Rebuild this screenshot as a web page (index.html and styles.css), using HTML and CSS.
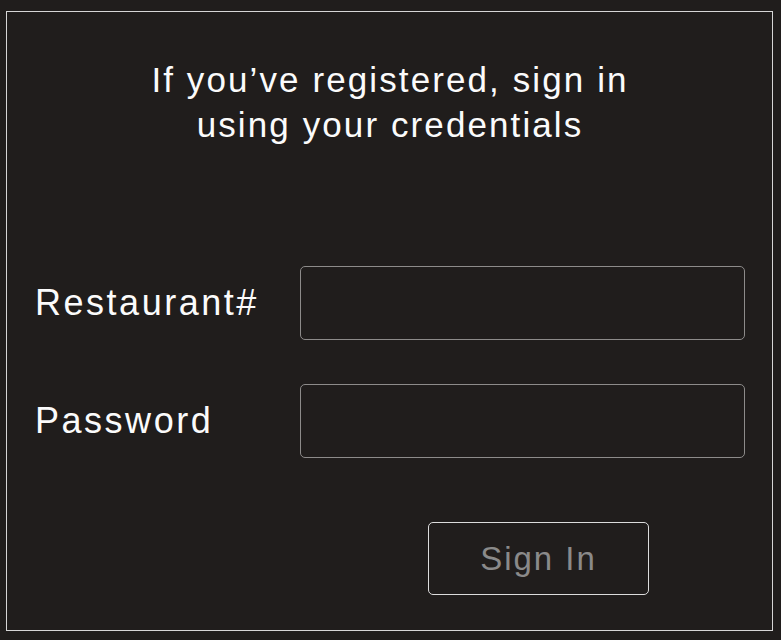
FILE: index.html
```html
<!DOCTYPE html>
<html lang="en">
<head>
<meta charset="utf-8">
<title>Sign in</title>
<link rel="stylesheet" href="styles.css">
</head>
<body>
<div class="card">
  <h1 class="title">If you’ve registered, sign in<br>using your credentials</h1>
  <form class="form">
    <label class="label" for="rest">Restaurant#</label>
    <input class="field" id="rest" type="text">
    <label class="label" for="pw">Password</label>
    <input class="field" id="pw" type="password">
    <button class="btn" type="button">Sign In</button>
  </form>
</div>
</body>
</html>
```
FILE: styles.css
```css
html, body {
  margin: 0;
  background: #201d1c;
}
body {
  padding: 11px 0 0 6px;
  font-family: "Liberation Sans", Arial, sans-serif;
  color: #fbfbfb;
}
.card {
  box-sizing: border-box;
  width: 767px;
  height: 620px;
  border: 1px solid #d6d6d6;
  padding: 45px 27px 0 28px;
}
.title {
  margin: 0;
  font-weight: normal;
  font-size: 35px;
  line-height: 45px;
  letter-spacing: 0.06em;
  text-align: center;
}
.form {
  display: grid;
  grid-template-columns: 265px 445px;
  grid-template-rows: 74px 74px auto;
  row-gap: 44px;
  align-items: center;
  margin-top: 119px;
}
.label {
  font-size: 36px;
  letter-spacing: 0.07em;
}
.field {
  box-sizing: border-box;
  height: 74px;
  width: 445px;
  background: transparent;
  border: 1px solid #8d8b8a;
  border-radius: 5px;
}
.btn {
  grid-column: 2;
  box-sizing: border-box;
  width: 221px;
  height: 73px;
  margin: 20px 0 0 128px;
  background: transparent;
  border: 1px solid #dcdcdc;
  border-radius: 5px;
  color: #8a8a8a;
  font-family: "Liberation Sans", Arial, sans-serif;
  font-size: 33px;
  letter-spacing: 0.06em;
}
```
